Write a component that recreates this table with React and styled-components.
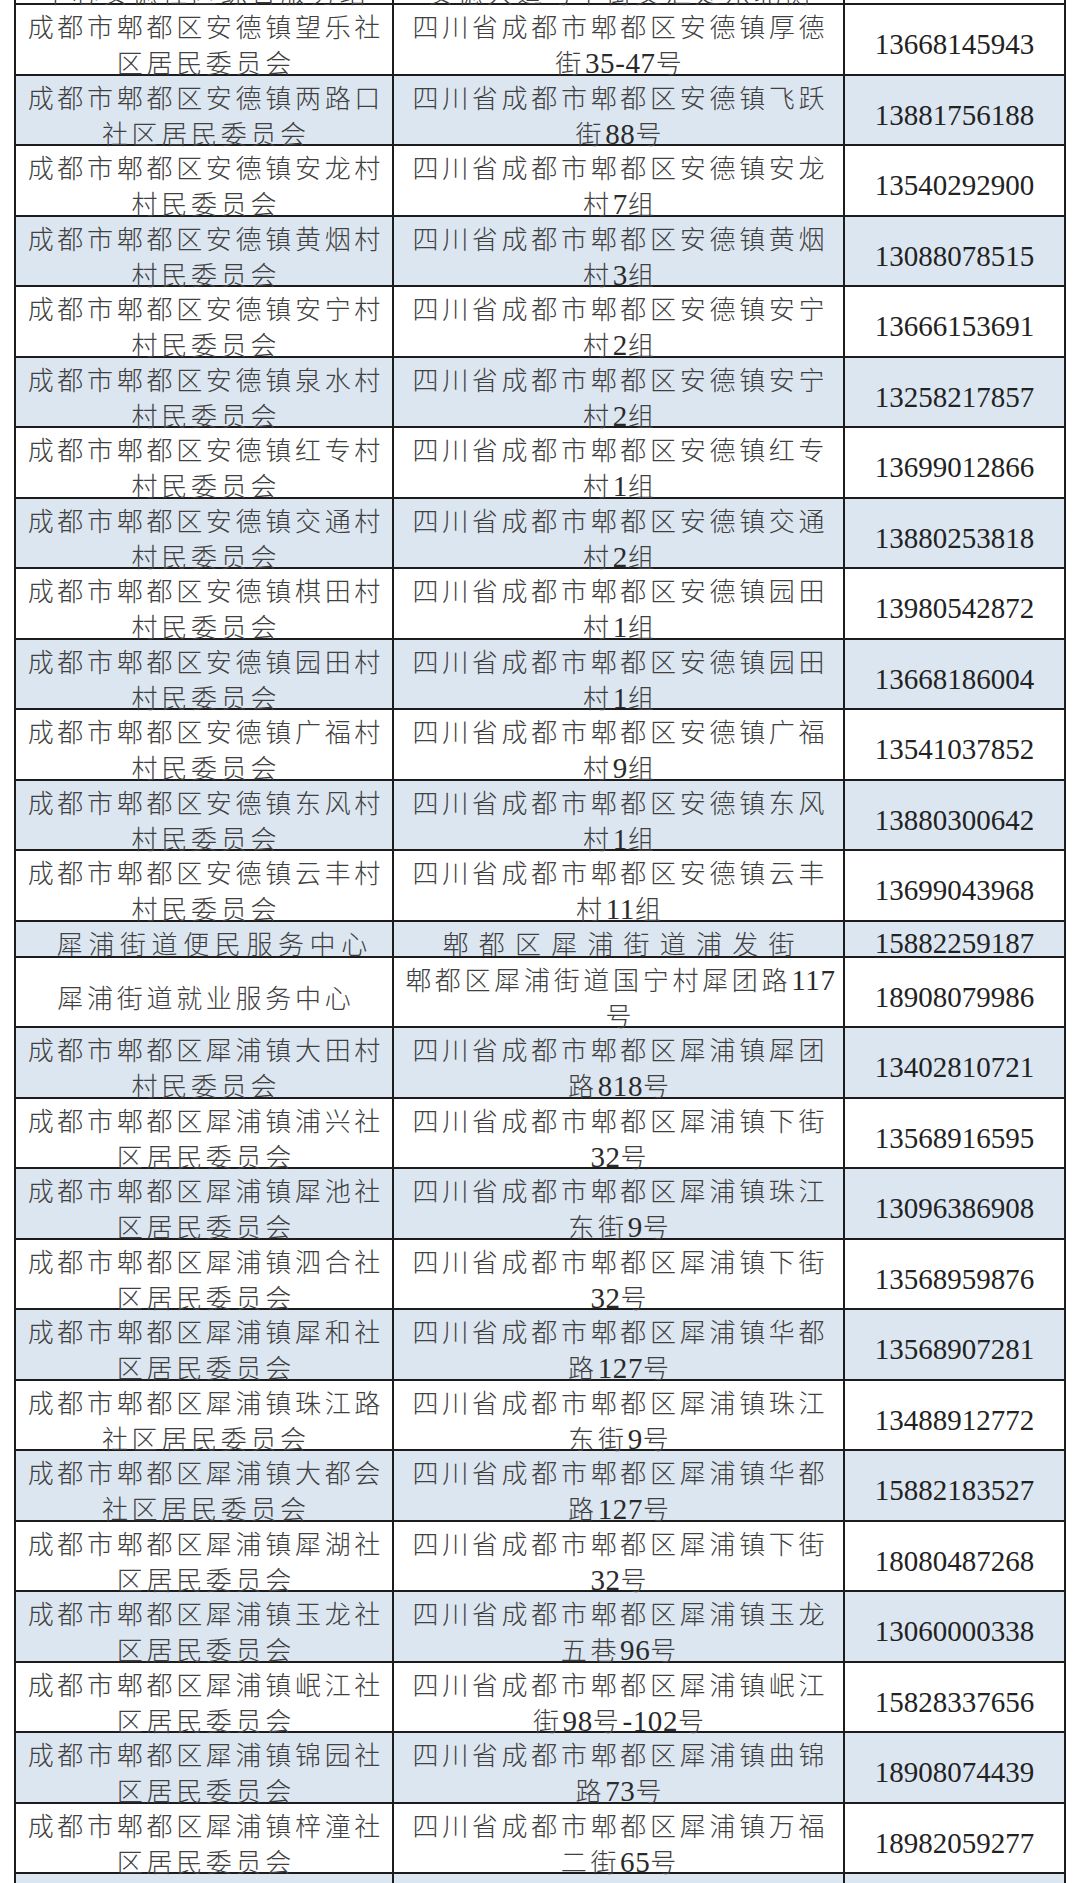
import React from "react";
import styled, { createGlobalStyle } from "styled-components";

const GlobalStyle = createGlobalStyle`
  html, body {
    margin: 0;
    padding: 0;
    background: #ffffff;
  }
  body {
    font-family: "Noto Sans CJK SC", "Noto Sans", sans-serif;
  }
`;

const AD = "成都市郫都区安德镇";
const ADA = "四川省成都市郫都区安德镇";
const XP = "成都市郫都区犀浦镇";
const XPA = "四川省成都市郫都区犀浦镇";

// each row: name lines, address lines, phone
const rows = [
  { name: ["成都市郫都区安德镇便民服务", "中心安德社区综合服务站"], addr: ["四川省成都市郫都区安德镇", "安德大道与中街交汇处东北侧"], phone: "" },
  { name: [AD + "望乐社", "区居民委员会"], addr: [ADA + "厚德", "街35-47号"], phone: "13668145943" },
  { name: [AD + "两路口", "社区居民委员会"], addr: [ADA + "飞跃", "街88号"], phone: "13881756188" },
  { name: [AD + "安龙村", "村民委员会"], addr: [ADA + "安龙", "村7组"], phone: "13540292900" },
  { name: [AD + "黄烟村", "村民委员会"], addr: [ADA + "黄烟", "村3组"], phone: "13088078515" },
  { name: [AD + "安宁村", "村民委员会"], addr: [ADA + "安宁", "村2组"], phone: "13666153691" },
  { name: [AD + "泉水村", "村民委员会"], addr: [ADA + "安宁", "村2组"], phone: "13258217857" },
  { name: [AD + "红专村", "村民委员会"], addr: [ADA + "红专", "村1组"], phone: "13699012866" },
  { name: [AD + "交通村", "村民委员会"], addr: [ADA + "交通", "村2组"], phone: "13880253818" },
  { name: [AD + "棋田村", "村民委员会"], addr: [ADA + "园田", "村1组"], phone: "13980542872" },
  { name: [AD + "园田村", "村民委员会"], addr: [ADA + "园田", "村1组"], phone: "13668186004" },
  { name: [AD + "广福村", "村民委员会"], addr: [ADA + "广福", "村9组"], phone: "13541037852" },
  { name: [AD + "东风村", "村民委员会"], addr: [ADA + "东风", "村1组"], phone: "13880300642" },
  { name: [AD + "云丰村", "村民委员会"], addr: [ADA + "云丰", "村11组"], phone: "13699043968" },
  { name: ["犀浦街道便民服务中心"], addr: ["郫都区犀浦街道浦发街"], phone: "15882259187", single: true, nameLs: 5.6, nameShift: 16, addrLs: 10.2 },
  { name: ["犀浦街道就业服务中心"], addr: ["郫都区犀浦街道国宁村犀团路117", "号"], phone: "18908079986" },
  { name: [XP + "大田村", "村民委员会"], addr: [XPA + "犀团", "路818号"], phone: "13402810721" },
  { name: [XP + "浦兴社", "区居民委员会"], addr: [XPA + "下街", "32号"], phone: "13568916595" },
  { name: [XP + "犀池社", "区居民委员会"], addr: [XPA + "珠江", "东街9号"], phone: "13096386908" },
  { name: [XP + "泗合社", "区居民委员会"], addr: [XPA + "下街", "32号"], phone: "13568959876" },
  { name: [XP + "犀和社", "区居民委员会"], addr: [XPA + "华都", "路127号"], phone: "13568907281" },
  { name: [XP + "珠江路", "社区居民委员会"], addr: [XPA + "珠江", "东街9号"], phone: "13488912772" },
  { name: [XP + "大都会", "社区居民委员会"], addr: [XPA + "华都", "路127号"], phone: "15882183527" },
  { name: [XP + "犀湖社", "区居民委员会"], addr: [XPA + "下街", "32号"], phone: "18080487268" },
  { name: [XP + "玉龙社", "区居民委员会"], addr: [XPA + "玉龙", "五巷96号"], phone: "13060000338" },
  { name: [XP + "岷江社", "区居民委员会"], addr: [XPA + "岷江", "街98号-102号"], phone: "15828337656" },
  { name: [XP + "锦园社", "区居民委员会"], addr: [XPA + "曲锦", "路73号"], phone: "18908074439" },
  { name: [XP + "梓潼社", "区居民委员会"], addr: [XPA + "万福", "二街65号"], phone: "18982059277" },
  { name: [XP + "犀通社", "区居民委员会"], addr: [XPA + "犀通", "路88号"], phone: "13981852216" },
];

export default function App() {
  return (
    <>
      <GlobalStyle />
      <Viewport>
        <Sheet>
          {rows.map((row, i) => (
            <Row key={i} $single={row.single} $shaded={i > 0 && i % 2 === 0}>
              <Cell>
                {row.name.map((t, j) => (
                  <Line key={j} $ls={row.nameLs} $shift={row.nameShift}>
                    <MixedText text={t} />
                  </Line>
                ))}
              </Cell>
              <Cell>
                {row.addr.map((t, j) => (
                  <Line key={j} $ls={row.addrLs}>
                    <MixedText text={t} />
                  </Line>
                ))}
              </Cell>
              <Cell>
                <Phone>{row.phone}</Phone>
              </Cell>
            </Row>
          ))}
        </Sheet>
      </Viewport>
    </>
  );
}

function MixedText({ text }) {
  const parts = text.split(/([0-9\-]+)/);
  return parts.map((p, k) =>
    /^[0-9\-]+$/.test(p) ? <Digits key={k}>{p}</Digits> : <React.Fragment key={k}>{p}</React.Fragment>
  );
}

const Viewport = styled.div`
  height: 1883px;
  overflow: hidden;
`;

const Sheet = styled.div`
  width: 1052px;
  margin: -65.5px 0 0 14px;
  border-left: 2px solid #1c1c1c;
  box-sizing: border-box;
`;

const Row = styled.div`
  display: grid;
  grid-template-columns: 378px 451px 221px;
  height: ${(p) => (p.$single ? 36 : 70.5)}px;
  box-sizing: border-box;
  border-bottom: 2px solid #1c1c1c;
  background: ${(p) => (p.$shaded ? "#dce6f1" : "#ffffff")};
`;

const Cell = styled.div`
  display: flex;
  flex-direction: column;
  align-items: center;
  justify-content: center;
  padding-top: 3px;
  box-sizing: border-box;
  border-right: 2px solid #1c1c1c;
  min-width: 0;
`;

const Line = styled.div`
  white-space: nowrap;
  font-size: 26px;
  line-height: 36px;
  height: 36px;
  font-weight: 300;
  color: #404040;
  letter-spacing: ${(p) => p.$ls ?? 3.7}px;
  padding-left: ${(p) => (p.$ls ?? 3.7) + (p.$shift ?? 0)}px;
`;

const Digits = styled.span`
  font-family: "Liberation Serif", serif;
  font-size: 29px;
  line-height: 0;
  letter-spacing: 0.6px;
  color: #2a2a2a;
`;

const Phone = styled.div`
  font-family: "Liberation Serif", serif;
  font-size: 29px;
  line-height: 36px;
  color: #222222;
`;
